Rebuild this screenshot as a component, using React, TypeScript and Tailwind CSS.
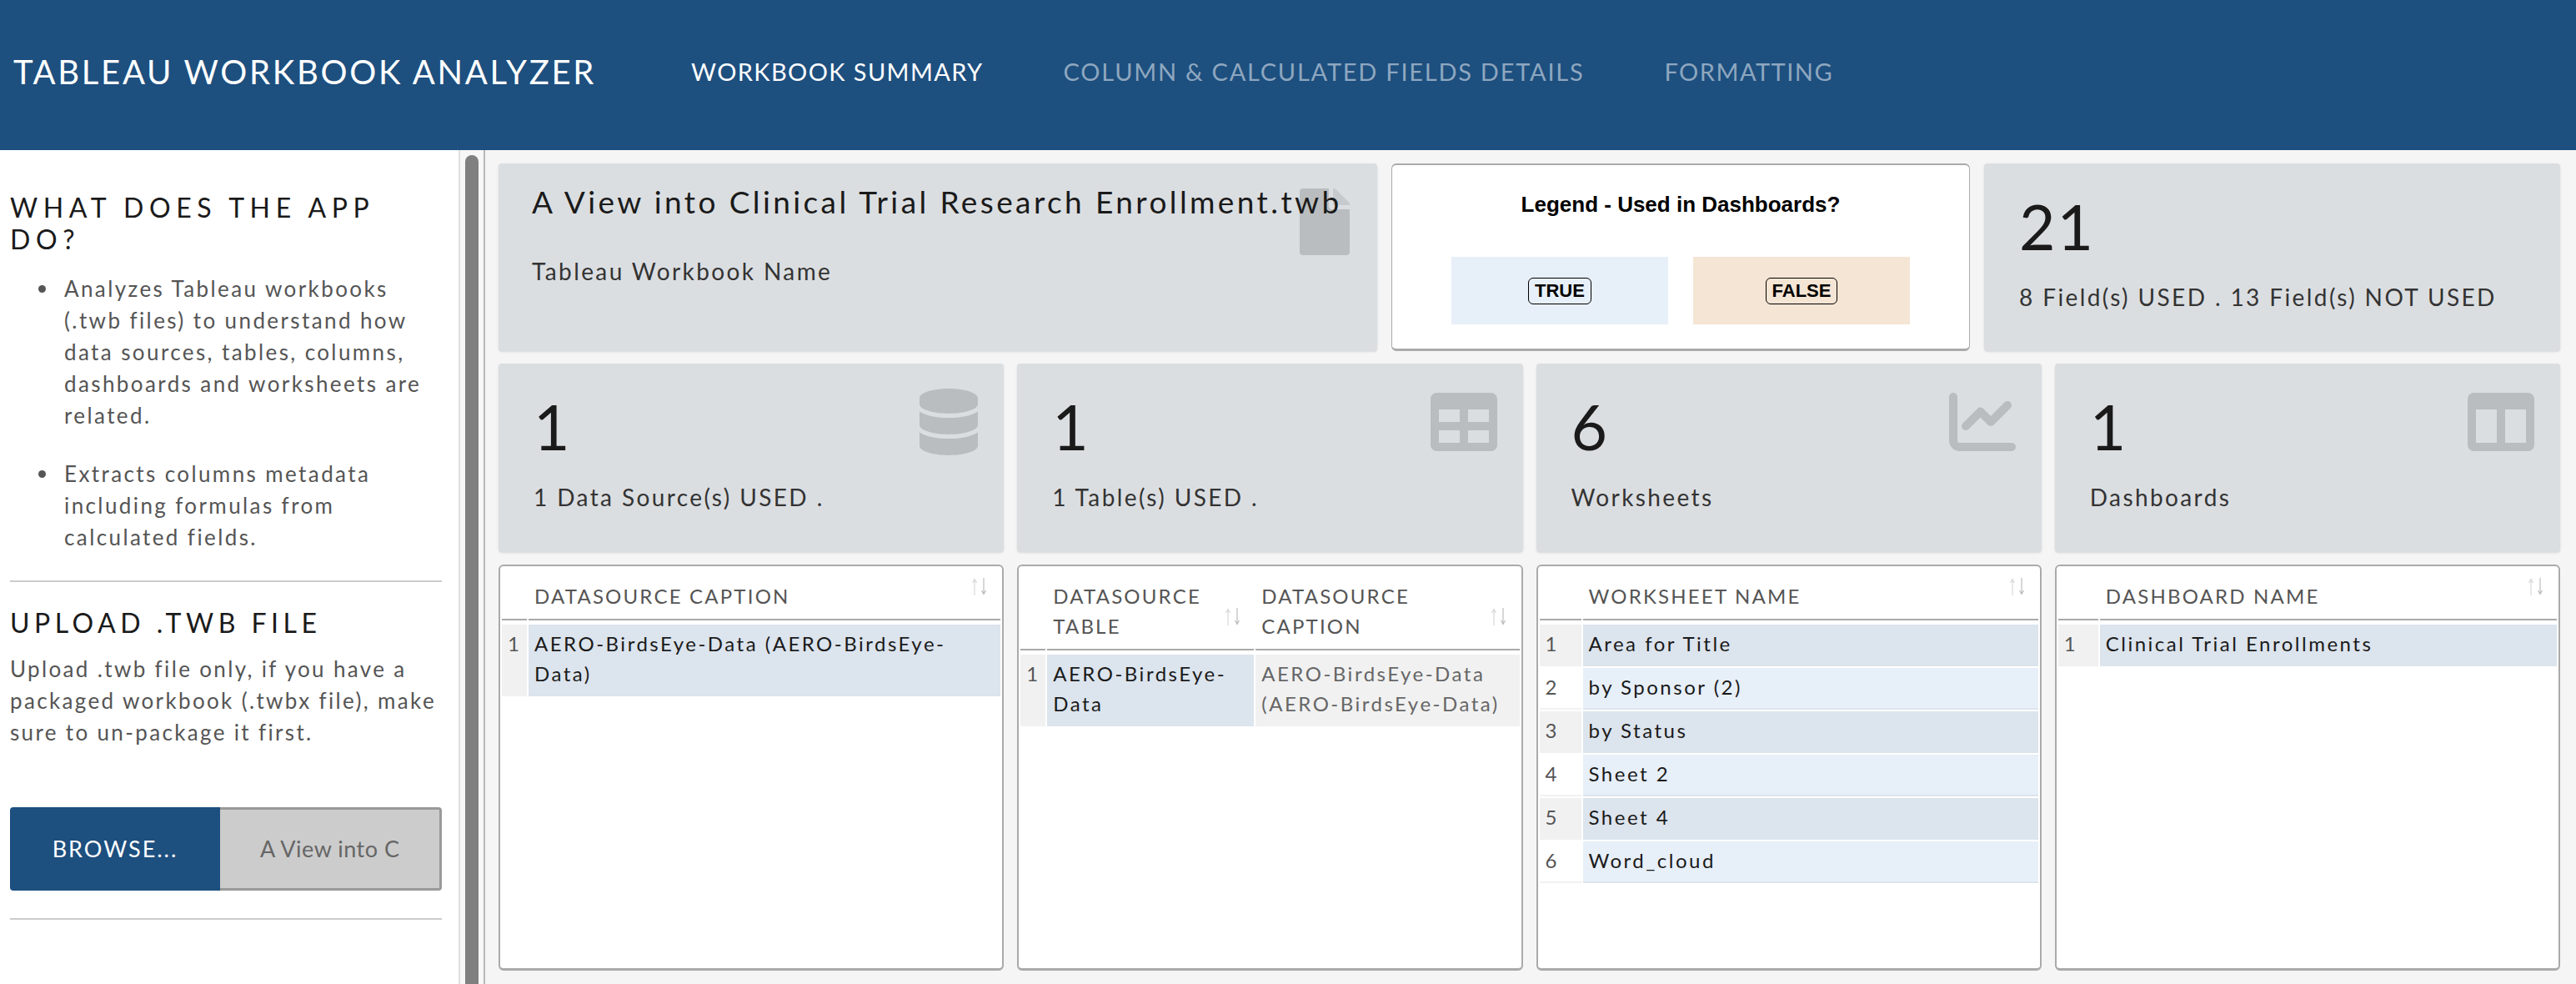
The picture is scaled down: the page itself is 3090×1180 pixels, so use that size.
import { FaDatabase, FaTable, FaColumns } from "react-icons/fa";
import { FaChartLine } from "react-icons/fa6";
import type { ReactNode } from "react";

const font = "font-['Lato','Noto_Sans',sans-serif]";

function SortIcon() {
  return (
    <svg className="absolute right-[14px] bottom-[28px]" width="22" height="21" viewBox="0 0 22 21" fill="none">
      <path d="M5 21V2M2.5 6L5 1.5L7.5 6" stroke="#d8d8d8" strokeWidth="1.2" />
      <path d="M16 0V19M13.5 15L16 19.5L18.5 15" stroke="#bdbdbd" strokeWidth="1.2" />
    </svg>
  );
}

function FileIcon() {
  return (
    <svg className="absolute right-[33px] top-[30px]" width="60" height="80" viewBox="0 0 384 512">
      <path
        fill="rgba(0,0,0,0.15)"
        d="M224 136V0H24C10.7 0 0 10.7 0 24v464c0 13.3 10.7 24 24 24h336c13.3 0 24-10.7 24-24V160H248c-13.2 0-24-10.8-24-24z"
      />
      <path fill="rgba(0,0,0,0.09)" d="M384 121.9v6.1H256V0h6.1c6.4 0 12.5 2.5 17 7l97.9 98c4.5 4.5 7 10.6 7 16.9z" />
    </svg>
  );
}

function Bullet({ children, className }: { children: ReactNode; className?: string }) {
  return (
    <li className={`flex ${className ?? ""}`}>
      <span className="mr-[22px] mt-[15px] h-[9px] w-[9px] shrink-0 rounded-full bg-[#555]" />
      <span>{children}</span>
    </li>
  );
}

function StatCard({ value, label, icon }: { value: string; label: string; icon?: ReactNode }) {
  return (
    <div className="relative rounded bg-[#dbdee1] pl-[42px] pt-[35px] shadow-sm">
      <div className="text-[75px] leading-[80px] tracking-[2px] text-[#1a1a1a]">{value}</div>
      <div className="mt-[25px] text-[28px] leading-[40px] tracking-[2.4px] text-[#333]">{label}</div>
      {icon}
    </div>
  );
}

const iconPos = "absolute right-[31px] top-[30px] text-[rgba(0,0,0,0.15)]";

type Cell = { text: string; tone: "dark" | "light" | "gray" };

function DataTable({ headers, rows, grid }: { headers: string[]; rows: Cell[][]; grid: string }) {
  return (
    <div className="h-[487px] overflow-hidden rounded-md border-x-2 border-t-2 border-b-[3px] border-[#aaaaaa] bg-white px-[2px] pt-[18px]">
      <div className={`grid gap-x-[2px] ${grid}`}>
        <div className="border-b-2 border-[#aaaaaa]" />
        {headers.map((h) => (
          <div key={h} className="relative border-b-2 border-[#aaaaaa] pb-[9px] pl-[7px] pr-[40px] text-[24px] leading-[36px] tracking-[2.2px] text-[#555]">
            {h}
            <SortIcon />
          </div>
        ))}
      </div>
      <div className={`mt-[5px] grid gap-[2px] ${grid}`}>
        {rows.map((r, i) => {
          const even = i % 2 === 1;
          return [
            <div
              key={`i${i}`}
              className={`px-[7px] text-[24px] leading-[36px] text-[#555] ${even ? "border-b-2 border-[#f1f1f1] bg-white pb-[7px] pt-[5px]" : "bg-[#f1f1f1] pb-[9px] pt-[5px]"}`}
            >
              {i + 1}
            </div>,
            ...r.map((c, j) => (
              <div
                key={j}
                className={
                  c.tone === "gray"
                    ? "bg-[#f1f1f1] px-[7px] pb-[9px] pt-[5px] text-[24px] leading-[36px] tracking-[2.5px] text-[#666]"
                    : c.tone === "dark"
                      ? "bg-[#dce4ed] px-[7px] pb-[9px] pt-[5px] text-[24px] leading-[36px] tracking-[2.5px] text-[#1a1a1a]"
                      : "border-b-2 border-[#dce4ed] bg-[#e7eff8] px-[7px] pb-[7px] pt-[5px] text-[24px] leading-[36px] tracking-[2.5px] text-[#1a1a1a]"
                }
              >
                {c.text}
              </div>
            )),
          ];
        })}
      </div>
    </div>
  );
}

const worksheets = ["Area for Title", "by Sponsor (2)", "by Status", "Sheet 2", "Sheet 4", "Word_cloud"];

export default function App() {
  return (
    <div className={`flex h-[1180px] w-[3090px] flex-col overflow-hidden bg-[#f5f5f5] ${font}`}>
      <header className="flex h-[180px] shrink-0 items-center bg-[#1d4f7f] pb-[8px] pl-[16px] text-white">
        <div className="w-[813px] text-[40px] tracking-[2.7px]">TABLEAU WORKBOOK ANALYZER</div>
        <nav className="flex gap-[96px] text-[29px]">
          <span className="tracking-[1.4px]">WORKBOOK SUMMARY</span>
          <span className="tracking-[1.75px] text-[#8ea7bf]">COLUMN &amp; CALCULATED FIELDS DETAILS</span>
          <span className="tracking-[1.5px] text-[#8ea7bf]">FORMATTING</span>
        </nav>
      </header>

      <div className="flex min-h-0 flex-1">
        <aside className="w-[550px] shrink-0 bg-white pl-[12px] pr-[20px] pt-[50px]">
          <h2 className="text-[32px] leading-[38px] tracking-[6.6px] text-[#1a1a1a]">WHAT DOES THE APP DO?</h2>
          <ul className="mt-[21px] pl-[34px] text-[26px] leading-[38px] tracking-[2.4px] text-[#555]">
            <Bullet className="mb-[32px]">Analyzes Tableau workbooks (.twb files) to understand how data sources, tables, columns, dashboards and worksheets are related.</Bullet>
            <Bullet>Extracts columns metadata including formulas from calculated fields.</Bullet>
          </ul>
          <hr className="mt-[33px] border-t-2 border-[#cccccc]" />
          <h2 className="mt-[30px] text-[32px] leading-[38px] tracking-[5.5px] text-[#1a1a1a]">UPLOAD .TWB FILE</h2>
          <p className="mt-[17px] text-[26px] leading-[38px] tracking-[2.35px] text-[#555]">
            Upload .twb file only, if you have a packaged workbook (.twbx file), make sure to un-package it first.
          </p>
          <div className="mt-[71px] flex h-[100px]">
            <div className="flex w-[252px] items-center justify-center rounded-l bg-[#1d4f7f] text-[27px] tracking-[2px] text-white">BROWSE...</div>
            <div className="flex flex-1 items-center overflow-hidden rounded-r border-y-[3px] border-r-[3px] border-[#999999] bg-[#cccccc] pl-[48px] text-[27px] tracking-[0.5px] text-[#666]">
              A View into C
            </div>
          </div>
          <hr className="mt-[33px] border-t-2 border-[#cccccc]" />
        </aside>

        <div className="w-[32px] shrink-0 border-l-2 border-r-2 border-l-[#e0e0e0] border-r-[#b8b8b8] bg-[#f7f7f7] pl-[6px] pt-[6px]">
          <div className="h-[1000px] w-[16px] rounded-t-full bg-[#808080]" />
        </div>

        <main className="flex min-w-0 flex-1 flex-col gap-[15px] pl-[16px] pr-[19px] pt-[16px]">
          <div className="grid h-[225px] grid-cols-[1054px_694px_1fr] gap-x-[17px]">
            <div className="relative rounded bg-[#dbdee1] pl-[40px] pt-[26px] shadow-sm">
              <FileIcon />
              <div className="relative text-[37px] leading-[40px] tracking-[3.4px] text-[#1a1a1a]">A View into Clinical Trial Research Enrollment.twb</div>
              <div className="relative mt-[43px] text-[28px] leading-[40px] tracking-[2.4px] text-[#333]">Tableau Workbook Name</div>
            </div>
            <div className="rounded-md border-x border-t-2 border-b-[3px] border-[#aaaaaa] bg-white pt-[29px] font-['Liberation_Sans',Arial,sans-serif]">
              <div className="text-center text-[26px] font-bold leading-[36px] text-black">Legend - Used in Dashboards?</div>
              <div className="mt-[45px] flex justify-center gap-[30px]">
                <div className="flex h-[81px] w-[260px] items-center justify-center bg-[#e7eff8]">
                  <span className="rounded-md border border-black px-[7px] text-[22px] font-bold leading-[30px] text-black">TRUE</span>
                </div>
                <div className="flex h-[81px] w-[260px] items-center justify-center bg-[#f5e5d4]">
                  <span className="rounded-md border border-black px-[7px] text-[22px] font-bold leading-[30px] text-black">FALSE</span>
                </div>
              </div>
            </div>
            <StatCard value="21" label="8 Field(s) USED . 13 Field(s) NOT USED" />
          </div>

          <div className="grid h-[226px] grid-cols-4 gap-x-[16px]">
            <StatCard value="1" label="1 Data Source(s) USED ." icon={<FaDatabase size={80} className="absolute right-[26px] top-[30px] text-[rgba(0,0,0,0.15)]" />} />
            <StatCard value="1" label="1 Table(s) USED ." icon={<FaTable size={80} className={iconPos} />} />
            <StatCard value="6" label="Worksheets" icon={<FaChartLine size={80} className={iconPos} />} />
            <StatCard value="1" label="Dashboards" icon={<FaColumns size={80} className={iconPos} />} />
          </div>

          <div className="grid grid-cols-4 gap-x-[16px]">
            <DataTable
              grid="grid-cols-[30px_1fr]"
              headers={["DATASOURCE CAPTION"]}
              rows={[[{ text: "AERO-BirdsEye-Data (AERO-BirdsEye-Data)", tone: "dark" }]]}
            />
            <DataTable
              grid="grid-cols-[30px_248px_1fr]"
              headers={["DATASOURCE TABLE", "DATASOURCE CAPTION"]}
              rows={[
                [
                  { text: "AERO-BirdsEye-Data", tone: "dark" },
                  { text: "AERO-BirdsEye-Data (AERO-BirdsEye-Data)", tone: "gray" },
                ],
              ]}
            />
            <DataTable
              grid="grid-cols-[50px_1fr]"
              headers={["WORKSHEET NAME"]}
              rows={worksheets.map((w, i) => [{ text: w, tone: i % 2 === 0 ? "dark" : "light" }])}
            />
            <DataTable
              grid="grid-cols-[48px_1fr]"
              headers={["DASHBOARD NAME"]}
              rows={[[{ text: "Clinical Trial Enrollments", tone: "dark" }]]}
            />
          </div>
        </main>
      </div>
    </div>
  );
}
